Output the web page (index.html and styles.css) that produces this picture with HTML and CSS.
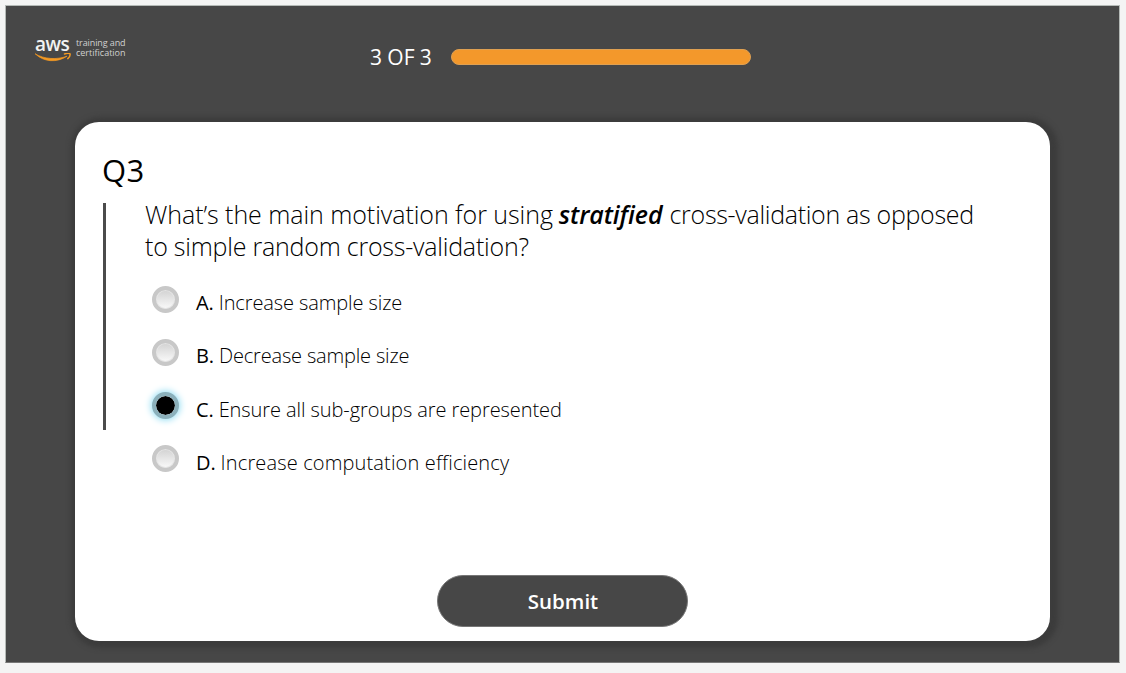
FILE: index.html
```html
<!DOCTYPE html>
<html lang="en">
<head>
<meta charset="utf-8">
<title>Knowledge check</title>
<link rel="stylesheet" href="styles.css">
</head>
<body>
<main class="stage">
  <header class="top">
    <div class="brand">
      <div class="aws"><span class="aws-word">aws</span>
        <svg class="smile" viewBox="0 0 36 9" width="36" height="9" fill="none" stroke="#f59a22" stroke-linecap="round" stroke-linejoin="round"><path d="M.4 1C9 6.200 22 7 32 3.200C22 9.800 9 9.300.4 1Z" fill="#f59a22" stroke-width=".7"/><path d="M29.500 1C32 0 34.700.200 35 .900C35.300 2.200 34 4.600 32.800 5.600" stroke-width="1.500"/></svg>
      </div>
      <div class="brand-text"><div>training and</div><div class="cert">certification</div></div>
    </div>
    <div class="count">3 OF 3</div>
    <div class="progress"></div>
  </header>
  <section class="card">
    <h1 class="number">Q3</h1>
    <div class="body">
      <div class="rule"></div>
      <div class="content">
        <div class="question">
          <div><span class="q1">What’s the main motivation for using</span><em class="strong">stratified</em><span class="q2">cross-validation as opposed</span></div>
          <div class="q3">to simple random cross-validation?</div>
        </div>
        <div class="options">
          <div class="option"><span class="radio"></span><b>A.</b><span class="oa">Increase sample size</span></div>
          <div class="option"><span class="radio"></span><b>B.</b><span class="ob">Decrease sample size</span></div>
          <div class="option"><span class="radio checked"></span><b>C.</b><span class="oc">Ensure all sub-groups are represented</span></div>
          <div class="option"><span class="radio"></span><b>D.</b><span class="od">Increase computation efficiency</span></div>
        </div>
      </div>
    </div>
    <button class="submit">Submit</button>
  </section>
</main>
</body>
</html>
```
FILE: styles.css
```css
* { box-sizing: border-box; }
body {
  margin: 0;
  padding: 5px 6px 10px 5px;
  height: 673px;
  background: #f4f4f4;
  font-family: "Open Sans", "Noto Sans", sans-serif;
  overflow: hidden;
}
.stage {
  height: 658px;
  border: 1px solid #b5bab7;
  border-bottom-color: #777;
  background: #474747;
}
.top { display: flex; height: 116px; padding-left: 29px; color: #fff; white-space: nowrap; }
.brand { display: flex; width: 335px; padding-top: 27px; }
.aws { width: 41px; }
.aws-word { display: block; height: 20px; font-size: 19px; line-height: 22px; font-weight: 600; letter-spacing: -.5px; color: #f2f2f2; }
.smile { display: block; }
.brand-text { padding-top: 5px; font-size: 9px; line-height: 10px; letter-spacing: -.1px; color: #d0d0d0; }
.cert { letter-spacing: 0; }
.count { width: 81px; padding-top: 36.500px; font-size: 21px; line-height: 28px; font-weight: 500; letter-spacing: -.05px; }
.progress { width: 300px; height: 16px; margin-top: 43px; border: 1px solid #dfa052; border-radius: 8px; background: #f3982b; }
.card {
  width: 975px;
  height: 519px;
  margin-left: 69px;
  padding: 27px 27px 0;
  border-radius: 24px;
  background: #fff;
  box-shadow: 2px 1px 5px 6px #3c3c3c;
}
.number { margin: 0; height: 53px; font-size: 31px; line-height: 42px; font-weight: 400; letter-spacing: .5px; }
.body { display: flex; height: 373px; }
.rule { width: 3px; height: 227px; margin: 1px 39px 0 1px; background: #4b4b4b; }
.question { height: 89px; margin-top: -4px; font-size: 25px; line-height: 32px; font-weight: 300; white-space: nowrap; }
.q1 { letter-spacing: -.05px; }
.strong { margin: 0 7px 0 6px; font-weight: 600; letter-spacing: -.1px; }
.q2 { letter-spacing: -.3px; }
.q3 { letter-spacing: -.22px; }
.option { display: flex; height: 53.300px; font-size: 20px; line-height: 27px; font-weight: 300; white-space: nowrap; }
.option b { margin: 2px 5px 0 17px; font-weight: 500; letter-spacing: -.1px; }
.option span:last-child { padding-top: 2px; }
.oa { letter-spacing: -.1px; }
.ob { letter-spacing: -.17px; }
.oc { letter-spacing: -.08px; }
.od { letter-spacing: .15px; }
.radio {
  width: 27px;
  height: 27px;
  margin: -1.500px 0 0 7px;
  border: 4px solid #c8c8c8;
  border-radius: 50%;
  background: linear-gradient(#d2d2d2, #fafafa);
  box-shadow: inset 0 0 0 1px #e5e5e5;
}
.checked {
  border-color: #8bb0bb;
  background: #000;
  background-clip: padding-box;
  box-shadow: 0 0 7px 1px #8fdcf2;
}
.submit {
  display: block;
  width: 251px;
  height: 52px;
  margin: 0 auto;
  padding: 0 0 0 1px;
  border: 1px solid #767676;
  border-radius: 26px;
  background: #474747;
  color: #fff;
  font: 600 20.500px/50px "Open Sans", sans-serif;
}
```
